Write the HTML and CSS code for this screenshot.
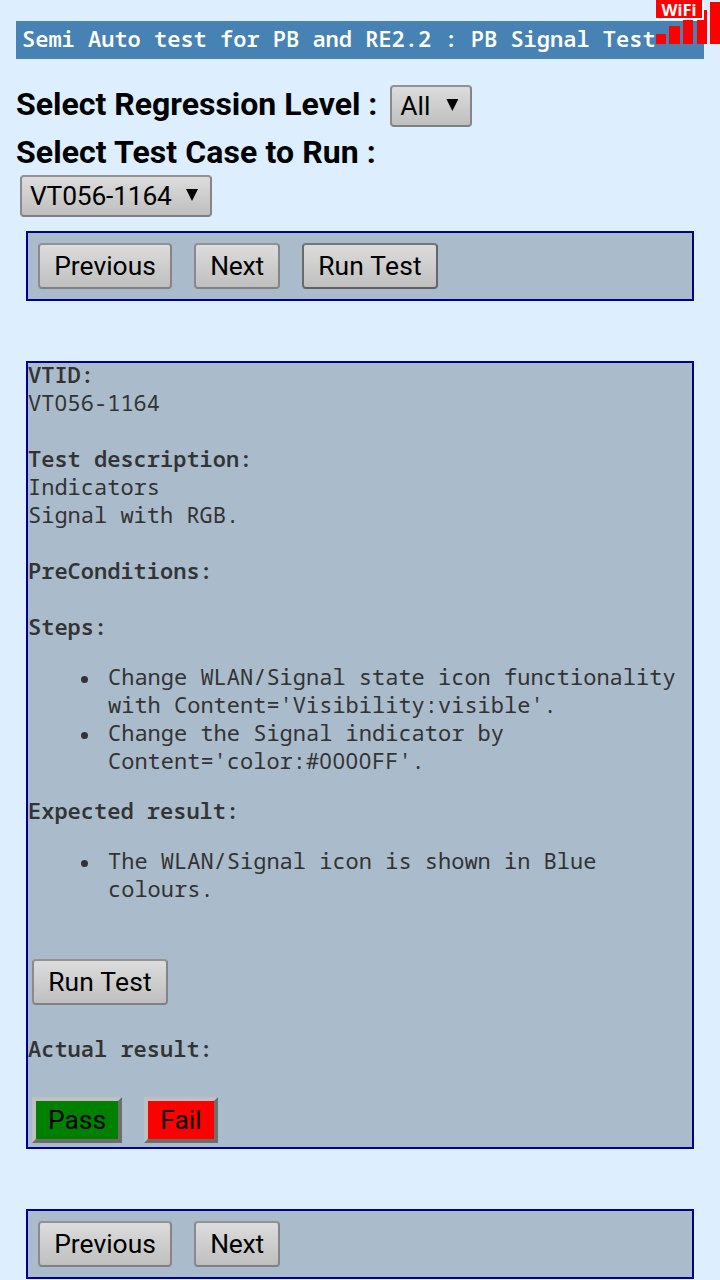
FILE: index.html
```html
<!DOCTYPE html>
<html lang="en">
<head>
<meta charset="utf-8">
<title>PB Signal Test</title>
<link rel="stylesheet" href="styles.css">
</head>
<body>
<header class="title">Semi Auto test for PB and RE2.2 : PB Signal Test</header>
<div class="wifi">
<svg class="bars" width="64" height="44" viewBox="0 0 64 44" shape-rendering="crispEdges">
<path fill="#f00" d="M0 34h10v10H0zM13 26h11v18H13zM27 15h10v29H27zM41 10h10v34H41zM54 2h10v42H54z"/>
<path fill="#fff" d="M1 1h47v19H1z"/>
<path fill="#f00" d="M0 0h46v18H0z"/>
</svg>
<span class="wifi-text">WiFi</span>
</div>
<div class="row level"><label>Select Regression Level :</label><div class="btn select">All<i class="arrow"></i></div></div>
<div class="row case"><label>Select Test Case to Run :</label></div>
<div class="btn select wide">VT056-1164<i class="arrow"></i></div>
<nav class="panel nav"><button class="btn previous">Previous</button><button class="btn next">Next</button><button class="btn run-test focus">Run Test</button></nav>
<main class="panel detail">
<p><b>VTID:</b><br>VT<span class="zero">0</span>56-1164</p>
<p><b>Test description:</b><br>Indicators<br>Signal with RGB.</p>
<p><b>PreConditions:</b></p>
<p class="tight"><b>Steps:</b></p>
<ul><li>Change WLAN/Signal state icon functionality<br>with Content='Visibility:visible'.</li><li>Change the Signal indicator by<br>Content='color:#<span class="zero">0000</span>FF'.</li></ul>
<p class="tight"><b>Expected result:</b></p>
<ul><li>The WLAN/Signal icon is shown in Blue<br>colours.</li></ul>
<button class="btn run-test block">Run Test</button>
<p class="actual"><b>Actual result:</b></p>
<div class="verdict"><button class="btn flag pass">Pass</button><button class="btn flag fail">Fail</button></div>
</main>
<nav class="panel nav last"><button class="btn previous">Previous</button><button class="btn next">Next</button></nav>
</body>
</html>
```
FILE: styles.css
```css
* { box-sizing: border-box; }
html { background: #def; }
body { margin: 0; height: 1280px; padding: 21px 16px 0; overflow: hidden; position: relative; display: flex; flex-direction: column; align-items: flex-start; font-family: Roboto, sans-serif; color: #000; }
.title { width: 688px; height: 38px; flex: none; padding-left: 6px; background: #4682b4; color: #fff; font: 600 22px/34px "Droid Sans Mono", "Noto Sans Mono", "DejaVu Sans Mono", monospace; white-space: pre; }
.wifi { position: absolute; right: 0; top: 0; width: 64px; height: 44px; }
.bars { display: block; }
.wifi-text { position: absolute; left: 5.5px; top: 0; color: #fff; font: bold 16.5px/19px "Noto Sans", sans-serif; }
.row { display: flex; align-items: flex-start; font-weight: bold; font-size: 32px; line-height: 38px; }
.level { margin-top: 26px; height: 48px; gap: 13px; }
.case { height: 42px; letter-spacing: 0.09px; }
.btn { flex: none; height: 46px; margin: 0; padding: 0; border: 2px solid #858585; border-color: #929292 #858585 #808080 #8a8a8a; border-radius: 4px; background: linear-gradient(#dcdcdc, #bfbfbf); color: #000; font: 400 26.4px/42px Roboto, sans-serif; text-align: center; white-space: nowrap; }
.previous { width: 134px; }
.next { width: 86px; letter-spacing: -0.2px; }
.run-test { width: 136px; letter-spacing: 0.2px; }
.select { display: flex; justify-content: space-between; height: 42px; width: 82px; line-height: 38px; padding: 0 12px 0 8px; letter-spacing: 0; }
.wide { width: 192px; margin: 0 0 0 4px; letter-spacing: -0.2px; }
.arrow { width: 12px; height: 12px; margin-top: 12px; background: #000; clip-path: polygon(0 0, 100% 0, 50% 100%); }
.panel { width: 668px; margin-left: 10px; flex: none; border: 2px solid #00008b; background: #abc; }
.nav { height: 70px; margin-top: 14px; padding: 10px; display: flex; gap: 22px; }
.btn.focus { border-color: #757575 #666 #606060 #6a6a6a; }
.detail { height: 788px; margin-top: 60px; display: flex; flex-direction: column; align-items: flex-start; color: #333; font: 22px/28px "Droid Sans Mono", "Noto Sans Mono", "DejaVu Sans Mono", monospace; }
.detail p { margin: 0 0 28px; }
.detail p:first-child { margin-top: -3px; }
.detail b { font-weight: 600; }
.zero { font-family: "Noto Sans", sans-serif; letter-spacing: 0.616px; line-height: 1; }
.detail .tight { margin: 0; }
.detail ul { margin: 22px 0; padding-left: 80px; list-style: none; }
.detail li::before { content: ""; float: left; width: 7px; height: 7px; border-radius: 50%; background: #333; margin: 14px 0 0 -27px; }
.block { margin: 35px 0 0 4px; }
.detail .actual { margin: 29px 0 35px; }
.verdict { display: flex; gap: 22px; padding-left: 4px; }
.flag { border: 4px solid; border-color: #c0c0c0 #6d6d6d #6d6d6d #c0c0c0; border-radius: 0; line-height: 38px; }
.pass { width: 90px; background: #008000; }
.fail { width: 74px; background: #f00; }
.last { margin-top: 60px; }
```
